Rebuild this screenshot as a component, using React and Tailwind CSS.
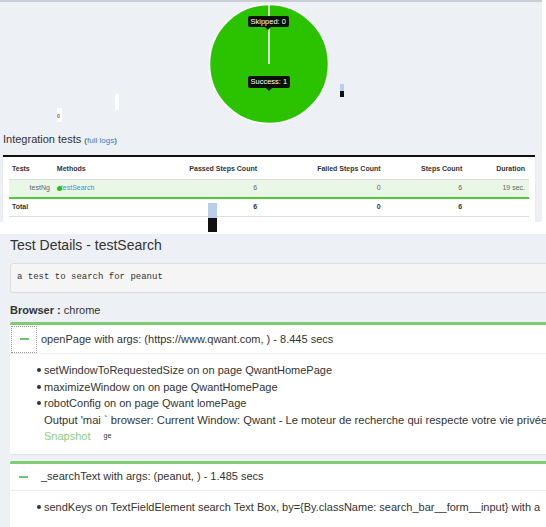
function Item({ children }) {
  return (
    <div className="flex items-center whitespace-nowrap">
      <span className="w-[4px] h-[4px] rounded-full bg-[#333] ml-[-7px] mr-[3px] shrink-0" />
      <span>{children}</span>
    </div>
  );
}

export default function App() {
  return (
    <div className="relative w-[546px] h-[527px] overflow-hidden bg-white font-['Liberation_Sans',Arial,sans-serif] text-[#333]">
      {/* Summary section */}
      <div className="w-[542px] h-[222px] bg-[#edf0f5] border-t-2 border-[#c9ced6]">
        <div className="relative h-[124px] pt-px flex justify-center">
          <div className="relative ml-[-5px]">
            <svg width="122" height="122" viewBox="0 0 122 122">
              <circle cx="61" cy="61" r="59.5" fill="#2bc200" stroke="#ffffff" strokeWidth="1.5" />
              <line x1="61" y1="61" x2="61" y2="1" stroke="#ffffff" strokeWidth="1.5" />
            </svg>
            <div className="absolute left-[40px] top-[13px] flex flex-col items-center">
              <div className="bg-[#071204] text-white text-[7.5px] leading-[11px] px-[3px] rounded-[2px]">Skipped: 0</div>
              <div className="w-0 h-0 border-l-[3px] border-r-[3px] border-t-[3px] border-l-transparent border-r-transparent border-t-[#071204]" />
            </div>
            <div className="absolute left-[40px] top-[73px] flex flex-col items-center">
              <div className="bg-[#071204] text-white text-[7.5px] leading-[12px] px-[3px] rounded-[2px]">Success: 1</div>
              <div className="w-0 h-0 border-l-[3px] border-r-[3px] border-t-[3px] border-l-transparent border-r-transparent border-t-[#071204]" />
            </div>
          </div>
        </div>

        <div className="px-[3px] text-[11px] leading-[14px] text-[#333] mt-[6px]">
          Integration tests <span className="text-[8px]">(<span className="text-[#3a7ec4]">full logs</span>)</span>
        </div>

        <div className="mx-[3px] mt-[7px] w-[532px] h-[68px] bg-white border-t-2 border-[#111] shadow-[0_1px_2px_rgba(0,0,0,0.08)] px-[6px] text-[7px]">
          <div className="flex h-[23px] pt-[3px] items-center font-bold text-[#333] border-b border-[#dddddd]">
            <div className="w-[44px] pl-[3px]">Tests</div>
            <div className="w-[97px] pl-[4px]">Methods</div>
            <div className="w-[112px] text-right pr-[4px]">Passed Steps Count</div>
            <div className="w-[122px] text-right pr-[2px]">Failed Steps Count</div>
            <div className="w-[84px] text-right pr-[4px]">Steps Count</div>
            <div className="w-[63px] text-right pr-[4px]">Duration</div>
          </div>
          <div className="flex h-[19px] items-center bg-[#eaf6e6] border-b-2 border-[#4fcc3a] text-[#666]">
            <div className="w-[44px] text-right pr-[3px]">testNg</div>
            <div className="w-[97px] pl-[4px] flex items-center">
              <span className="inline-block w-[5px] h-[5px] rounded-full bg-[#22c400] mr-[-1px]" />
              <span className="text-[#4a8fd0]">testSearch</span>
            </div>
            <div className="w-[112px] text-right pr-[4px]">6</div>
            <div className="w-[122px] text-right pr-[2px]">0</div>
            <div className="w-[84px] text-right pr-[4px]">6</div>
            <div className="w-[63px] text-right pr-[4px]">19 sec.</div>
          </div>
          <div className="flex h-[18px] items-center font-bold text-[#333] border-b border-[#dddddd]">
            <div className="w-[44px] pl-[3px]">Total</div>
            <div className="w-[97px]" />
            <div className="w-[112px] text-right pr-[4px]">6</div>
            <div className="w-[122px] text-right pr-[2px]">0</div>
            <div className="w-[84px] text-right pr-[4px]">6</div>
            <div className="w-[63px]" />
          </div>
        </div>
      </div>

      {/* gap */}
      <div className="h-[12px] bg-white" />

      {/* Test details section */}
      <div className="h-[293px] bg-[#edf0f5] pl-[10px] pt-[3px]">
        <div className="text-[14px] leading-[16px] text-[#333]">Test Details - testSearch</div>
        <div className="mt-[10px] w-[600px] h-[30px] bg-[#f5f5f5] border border-[#dddddd] rounded-[3px] flex items-center pl-[6px] font-['Liberation_Mono',monospace] text-[9px] text-[#333]">
          a test to search for peanut
        </div>
        <div className="mt-[10px] text-[11px] leading-[14px]">
          <span className="font-bold">Browser :</span> chrome
        </div>

        <div className="mt-[5px] w-[600px] bg-white border-t-[3px] border-[#7fcd70] rounded-[2px] shadow-[0_1px_1px_rgba(0,0,0,0.06)]">
          <div className="flex items-center h-[29px] border-b border-[#eeeeee]">
            <div className="ml-px w-[26px] h-[27px] border border-dotted border-[#999] flex items-center justify-center">
              <div className="w-[9px] h-[2px] bg-[#6cc36c]" />
            </div>
            <div className="ml-[4px] text-[11px] text-[#333]">openPage with args: (https://www.qwant.com, ) - 8.445 secs</div>
          </div>
          <div className="pt-[8px] pb-[9px] pl-[34px] text-[11px] leading-[16.5px] text-[#333]">
            <Item>setWindowToRequestedSize on on page QwantHomePage</Item>
            <Item>maximizeWindow on on page QwantHomePage</Item>
            <Item>robotConfig on on page Qwant lomePage</Item>
            <div className="whitespace-nowrap text-[11.2px]">Output 'mai ` browser: Current Window: Qwant - Le moteur de recherche qui respecte votre vie privée</div>
            <div className="text-[#8ccf80]">Snapshot <span className="text-[7px] text-[#333] align-top ml-[10px]">ge</span></div>
          </div>
        </div>

        <div className="mt-[7px] w-[600px] h-[67px] bg-white border-t-[3px] border-[#7fcd70] rounded-[2px] shadow-[0_1px_1px_rgba(0,0,0,0.06)]">
          <div className="flex items-center h-[27px] border-b border-[#eeeeee]">
            <div className="ml-[9px] w-[9px] h-[2px] bg-[#6cc36c]" />
            <div className="ml-[13px] text-[11px] text-[#333]">_searchText with args: (peanut, ) - 1.485 secs</div>
          </div>
          <div className="pt-[8px] pl-[34px] text-[11px] leading-[16.5px] text-[#333]">
            <Item>sendKeys on TextFieldElement search Text Box, by={'{'}By.className: search_bar__form__input{'}'} with a</Item>
          </div>
        </div>
      </div>

      {/* rendering glitches overlaid in the capture */}
      <div className="absolute left-[115px] top-[94px] w-[4px] h-[16px] bg-white" />
      <div className="absolute left-[57px] top-[108px] w-[5px] h-[14px] bg-white text-[5px] leading-[14px] text-[#333]">g</div>
      <div className="absolute left-[340px] top-[84px] w-[4px] h-[7px] bg-[#b9cfe9]" />
      <div className="absolute left-[340px] top-[91px] w-[4px] h-[6px] bg-[#111]" />
      <div className="absolute left-[208px] top-[203px] w-[9px] h-[15px] bg-[#b9cfe9]" />
      <div className="absolute left-[208px] top-[218px] w-[9px] h-[14px] bg-[#111]" />
    </div>
  );
}
